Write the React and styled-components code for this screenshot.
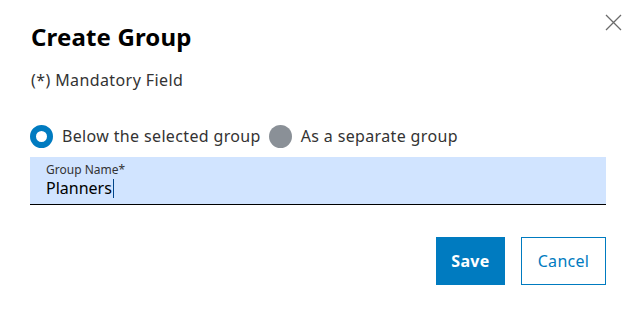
import React, { useState } from "react";
import styled, { createGlobalStyle } from "styled-components";

const GlobalStyle = createGlobalStyle`
  body {
    margin: 0;
    background: #ffffff;
    font-family: "Noto Sans", "Open Sans", sans-serif;
    color: #000;
  }
`;

const Dialog = styled.div`
  position: relative;
  width: 636px;
  height: 314px;
  box-sizing: border-box;
  padding: 21px 30px 0 30px;
  display: flex;
  flex-direction: column;
`;

const CloseButton = styled.button`
  position: absolute;
  top: 12px;
  right: 13px;
  width: 20px;
  height: 20px;
  padding: 0;
  border: none;
  background: none;
  cursor: pointer;
  display: flex;
  align-items: center;
  justify-content: center;
`;

const Title = styled.h1`
  margin: 0;
  font-size: 24px;
  line-height: 32px;
  font-weight: 700;
  letter-spacing: 0.15px;
  padding-left: 1px;
`;

const Mandatory = styled.p`
  margin: 17px 0 0 0;
  font-size: 16px;
  line-height: 20px;
  letter-spacing: 0.4px;
  color: #333;
  padding-left: 1px;
`;

const RadioRow = styled.div`
  display: flex;
  align-items: center;
  margin-top: 34px;
  gap: 8px;
`;

const RadioLabel = styled.label`
  display: flex;
  align-items: center;
  gap: 9px;
  font-size: 16px;
  line-height: 24px;
  letter-spacing: 0.35px;
  color: #333;
  cursor: pointer;
`;

const RadioDot = styled.span`
  width: 23px;
  height: 23px;
  flex: none;
  border-radius: 50%;
  box-sizing: border-box;
  background: ${(p) => (p.$checked ? "#ffffff" : "#8a9097")};
  border: ${(p) => (p.$checked ? "6px solid #007bc0" : "none")};
`;

const Field = styled.div`
  margin-top: 9px;
  background: #d1e4ff;
  border-bottom: 1px solid #000;
  height: 48px;
  box-sizing: border-box;
  padding: 5px 16px 0 16px;
  display: flex;
  flex-direction: column;
`;

const FieldLabel = styled.span`
  font-size: 12px;
  line-height: 16px;
  color: #333;
`;

const FieldValue = styled.span`
  font-size: 16px;
  line-height: 20px;
  color: #000;
  display: flex;
  align-items: center;
`;

const Caret = styled.span`
  display: inline-block;
  width: 1px;
  height: 19px;
  background: #00458a;
  margin-left: 1px;
`;

const Actions = styled.div`
  display: flex;
  justify-content: flex-end;
  gap: 16px;
  margin-top: 32px;
`;

const Button = styled.button`
  height: 48px;
  width: ${(p) => p.$width}px;
  box-sizing: border-box;
  padding: 0;
  font-family: inherit;
  font-size: 16px;
  letter-spacing: 0.3px;
  font-weight: ${(p) => (p.$primary ? 700 : 400)};
  background: ${(p) => (p.$primary ? "#007bc0" : "#ffffff")};
  color: ${(p) => (p.$primary ? "#ffffff" : "#007bc0")};
  border: 1px solid #007bc0;
  cursor: pointer;
`;

export default function App() {
  const [mode, setMode] = useState("below");
  return (
    <>
      <GlobalStyle />
      <Dialog>
        <CloseButton aria-label="Close">
          <svg width="17" height="17" viewBox="0 0 17 17">
            <path d="M1 1 L16 16 M16 1 L1 16" stroke="#6b6b6b" strokeWidth="1.3" />
          </svg>
        </CloseButton>
        <Title>Create Group</Title>
        <Mandatory>(*) Mandatory Field</Mandatory>
        <RadioRow>
          <RadioLabel onClick={() => setMode("below")}>
            <RadioDot $checked={mode === "below"} />
            Below the selected group
          </RadioLabel>
          <RadioLabel onClick={() => setMode("separate")}>
            <RadioDot $checked={mode === "separate"} />
            As a separate group
          </RadioLabel>
        </RadioRow>
        <Field>
          <FieldLabel>Group Name*</FieldLabel>
          <FieldValue>
            Planners
            <Caret />
          </FieldValue>
        </Field>
        <Actions>
          <Button $primary $width={69}>Save</Button>
          <Button $width={85}>Cancel</Button>
        </Actions>
      </Dialog>
    </>
  );
}
